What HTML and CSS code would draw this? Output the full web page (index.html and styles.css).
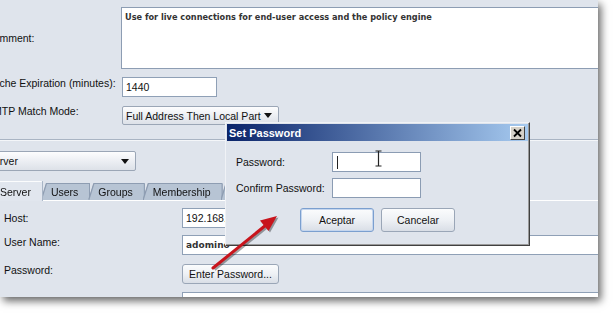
FILE: index.html
```html
<!DOCTYPE html>
<html>
<head>
<meta charset="utf-8">
<link rel="stylesheet" href="styles.css">
</head>
<body>
<div class="panel">
  <div class="form">
    <span class="lbl">Comment:</span>
    <div class="textarea">Use for live connections for end-user access and the policy engine</div>
    <span class="lbl">Cache Expiration (minutes):</span>
    <div class="field cache">1440</div>
    <span class="lbl">SMTP Match Mode:</span>
    <div class="select mode"><span>Full Address Then Local Part</span><span class="caret-down"></span></div>
  </div>
  <div class="sep"></div>
  <div class="select server"><span>Server</span><span class="caret-down"></span></div>
  <div class="tabs">
    <div class="tabwrap sel"><div class="tab">Server</div></div>
    <div class="tabwrap"><div class="tab">Users</div></div>
    <div class="tabwrap"><div class="tab">Groups</div></div>
    <div class="tabwrap"><div class="tab">Membership</div></div>
    <div class="tabwrap"><div class="tab">Options</div></div>
  </div>
  <div class="tabbody">
    <span class="lbl2">Host:</span>
    <div class="field host">192.168.1.10</div>
    <span class="lbl2">User Name:</span>
    <div class="field user mono">adomino</div>
    <span class="lbl2">Password:</span>
    <div class="btn enter">Enter Password...</div>
    <span class="lbl2"></span>
    <div class="field last"></div>
  </div>

  <div class="dialog">
    <div class="titlebar">
      <span>Set Password</span>
      <span class="close"><svg width="15" height="14" viewBox="0 0 15 14"><path d="M4 3.5 L11 10.5 M11 3.5 L4 10.5" stroke="#000" stroke-width="1.8"/></svg></span>
    </div>
    <div class="dbody">
      <span class="dlbl">Password:</span>
      <div class="field dfield"><span class="textcaret"></span></div>
      <span class="dlbl">Confirm Password:</span>
      <div class="field dfield"></div>
    </div>
    <div class="dbtns">
      <div class="btn dbtn focus">Aceptar</div>
      <div class="btn dbtn">Cancelar</div>
    </div>
    <svg class="ibeam" width="9" height="17" viewBox="0 0 9 17"><path d="M1.5 1 H7.5 M4.5 1 V16 M1.5 16 H7.5" stroke="#222" stroke-width="1.2" fill="none"/></svg>
  </div>

  <svg class="arrow" width="598" height="297" viewBox="0 0 598 297">
    <g transform="translate(1.5,1.5)" opacity="0.35">
      <line x1="213" y1="268" x2="266" y2="225" stroke="#000" stroke-width="3"/>
      <polygon points="277,216 268.5,231 260,220.5" fill="#000"/>
    </g>
    <line x1="213" y1="268" x2="266" y2="225" stroke="#c8141c" stroke-width="3" stroke-linecap="round"/>
    <polygon points="277,216 268.5,231 260,220.5" fill="#c8141c"/>
  </svg>
</div>
</body>
</html>
```
FILE: styles.css
```css
* { box-sizing: border-box; }
body {
  margin: 0;
  background: #fff;
  width: 614px;
  height: 313px;
  overflow: hidden;
  font-family: "Liberation Sans", Arial, sans-serif;
  font-size: 10.5px;
  color: #111;
}
.panel {
  position: relative;
  width: 598px;
  height: 297px;
  background: #dfe4ec;
  box-shadow: 3px 4px 8px rgba(0,0,0,.6);
  overflow: hidden;
}
.form {
  display: grid;
  grid-template-columns: 135px 1fr;
  align-items: center;
  margin-left: -14px;
  padding-top: 7px;
}
.lbl { line-height: 13px; white-space: nowrap; }
.textarea {
  height: 62px;
  margin-right: -4px;
  background: #fff;
  border: 1px solid #8d9db3;
  padding: 4px 3px;
  font-family: "DejaVu Sans", Verdana, sans-serif;
  font-weight: bold;
  font-size: 8.2px;
  color: #333;
}
.field {
  height: 20px;
  background: #fff;
  border: 1px solid #8fa0b6;
  padding: 0 3px;
  display: flex;
  align-items: center;
  white-space: nowrap;
  overflow: hidden;
}
.mono {
  font-family: "DejaVu Sans", Verdana, sans-serif;
  font-weight: bold;
  font-size: 9px;
  color: #333;
}
.cache { width: 95px; margin-top: 8px; margin-left: 1px; }
.select {
  height: 19px;
  display: flex;
  align-items: center;
  justify-content: space-between;
  padding: 0 6px 0 3px;
  background: linear-gradient(#fdfdfe, #e9ecf1 60%, #dde1e8);
  border: 1px solid #9ba6b6;
  border-radius: 2px;
  white-space: nowrap;
}
.caret-down {
  width: 0; height: 0;
  border-left: 4px solid transparent;
  border-right: 4px solid transparent;
  border-top: 5px solid #111;
}
.mode { width: 157px; margin-top: 9px; margin-left: 1px; }
.sep {
  margin-top: 14px;
  height: 2px;
  border-top: 1px solid #a9b4c3;
  border-bottom: 1px solid #f4f6f9;
}
.server { width: 153px; height: 20px; margin-top: 10px; margin-left: -17px; }
.tabs {
  display: flex;
  align-items: flex-end;
  height: 19px;
  margin-top: 10px;
  margin-left: -12px;
}
.tabwrap {
  filter: drop-shadow(0 -1px 0 #8e9db2) drop-shadow(1px 0 0 #8e9db2) drop-shadow(-1px 0 0 #8e9db2);
}
.tab {
  height: 16px;
  padding: 0 11px 0 9px;
  display: flex;
  align-items: center;
  background: #b7c4d4;
  clip-path: polygon(5px 0, 100% 0, 100% 100%, 0 100%);
  white-space: nowrap;
}
.tabwrap.sel {
  position: relative;
  z-index: 1;
  margin-bottom: -1px;
  filter: drop-shadow(0 -1px 0 #fbfcfd) drop-shadow(1px 0 0 #a8b5c6);
}
.tabwrap.sel .tab {
  height: 19px;
  padding-left: 12px;
  background: #e1e6ee;
}
.tabbody {
  border-top: 1px solid #fff;
  padding-top: 7px;
  display: grid;
  grid-template-columns: 182px 1fr;
  align-items: center;
}
.lbl2 { padding-left: 4px; white-space: nowrap; }
.host { width: 218px; }
.user { margin-top: 7px; margin-right: -4px; }
.btn {
  display: flex;
  align-items: center;
  justify-content: center;
  background: linear-gradient(#fbfcfd, #eef1f5 50%, #d9dee6);
  border: 1px solid #9aa6b7;
  border-radius: 3px;
  white-space: nowrap;
}
.enter { width: 97px; height: 20px; margin-top: 9px; }
.last { margin-top: 8px; margin-right: -4px; }

.dialog {
  position: absolute;
  left: 225px;
  top: 122px;
  width: 305px;
  height: 124px;
  background: #dfe4ec;
  border: 1px solid;
  border-color: #f0f2f6 #404040 #404040 #f0f2f6;
  padding: 1px;
  box-shadow: inset -1px -1px 0 #9a9a9a;
}
.titlebar {
  height: 17px;
  display: flex;
  align-items: center;
  justify-content: space-between;
  padding: 0 3px 0 2px;
  background: linear-gradient(90deg, #0a246a, #a6caf0);
  color: #fff;
  font-weight: bold;
  font-size: 11px;
}
.close {
  width: 15px;
  height: 14px;
  display: flex;
  background: #d4d0c8;
  border: 1px solid;
  border-color: #fff #404040 #404040 #fff;
}
.close svg { margin: -1px; }
.dbody {
  display: grid;
  grid-template-columns: 96px 89px;
  row-gap: 6px;
  align-items: center;
  padding: 11px 0 0 9px;
}
.dlbl { white-space: nowrap; }
.dfield { border-color: #8b9cb3; }
.textcaret { width: 1px; height: 13px; background: #222; margin-left: 1px; }
.dbtns {
  display: flex;
  justify-content: center;
  gap: 7px;
  margin-top: 10px;
}
.dbtn { width: 74px; height: 24px; }
.dbtn.focus { border-color: #7b9fcf; box-shadow: inset 0 0 0 1px #c5d6ee; }
.ibeam { position: absolute; left: 148px; top: 27px; }
.arrow { position: absolute; left: 0; top: 0; pointer-events: none; }
```
